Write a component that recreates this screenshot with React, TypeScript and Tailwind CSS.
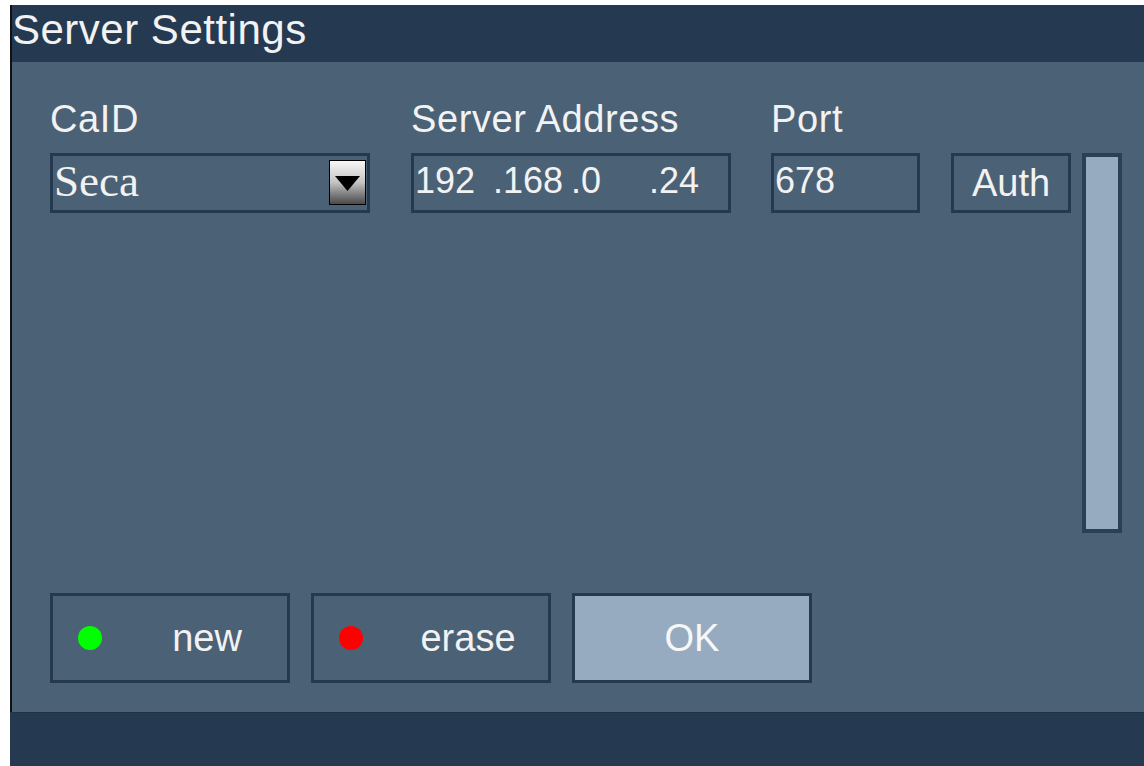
import React from 'react'

const sans = "font-['Liberation_Sans',Arial,sans-serif]"

// Field caption shown above each input column
function Label({ text, width }: { text: string; width: string }) {
  return (
    <div className={`${width} text-[38px] leading-none tracking-[0.6px] text-[#f2f2f2]`}>{text}</div>
  )
}

function DropArrow() {
  return (
    <div className="mt-[4px] mr-[1px] flex h-[45px] w-[37px] items-start justify-center border border-black bg-gradient-to-b from-[#f8f8f8] via-[#c4c4c4] to-[#4a4a4a]">
      <svg width="25" height="16" viewBox="0 0 25 16" className="mt-[15px]">
        <polygon points="0,0 25,0 12.5,15" fill="#000" />
      </svg>
    </div>
  )
}

function ActionButton({ label, dot }: { label: string; dot: string }) {
  return (
    <button className="flex h-[90px] w-[240px] items-center border-[3px] border-[#253a50] bg-[#4b6175]">
      <span className="flex w-[74px] justify-center">
        <span className={`h-[24px] w-[24px] rounded-full ${dot}`} />
      </span>
      <span className="flex-1 text-center text-[38px] leading-none text-[#f2f2f2]">{label}</span>
    </button>
  )
}

export default function App() {
  const ip = ['192', '.168', '.0', '.24']

  return (
    <div className={`h-[766px] w-[1144px] overflow-hidden bg-white pt-[5px] pl-[10px] ${sans}`}>
      <div className="flex h-[761px] flex-col">
        <div className="border-l-2 border-[#111]">
          {/* title bar */}
          <div className="h-[57px] bg-[#253a50] pt-[4px]">
            <h1 className="text-[42px] leading-none font-normal tracking-[0.5px] text-[#f2f2f2]">Server Settings</h1>
          </div>

          {/* form body */}
          <div className="h-[650px] bg-[#4b6175] pt-[38px] pl-[38px]">
            <div className="flex">
              <Label text="CaID" width="w-[361px]" />
              <Label text="Server Address" width="w-[360px]" />
              <Label text="Port" width="w-[180px]" />
            </div>

            <div className="mt-[15px] flex items-start">
              <div className="flex h-[60px] w-[320px] items-start justify-between border-[3px] border-[#253a50]">
                <span className="pt-[3px] pl-[1px] font-['Liberation_Serif',serif] text-[45px] leading-none text-[#f2f2f2]">
                  Seca
                </span>
                <DropArrow />
              </div>

              <div className="ml-[41px] flex h-[60px] w-[320px] border-[3px] border-[#253a50] pt-[7px] pl-[1px]">
                {ip.map((part) => (
                  <span key={part} className="w-[78px] text-[36px] leading-none text-[#f2f2f2]">
                    {part}
                  </span>
                ))}
              </div>

              <div className="ml-[40px] h-[60px] w-[149px] border-[3px] border-[#253a50] pt-[7px] pl-[1px] text-[36px] leading-none text-[#f2f2f2]">
                678
              </div>

              <button className="ml-[31px] flex h-[60px] w-[120px] items-center justify-center border-[3px] border-[#253a50] text-[38px] leading-none text-[#f2f2f2]">
                Auth
              </button>

              {/* scroll bar */}
              <div className="ml-[11px] h-[380px] w-[40px] border-4 border-[#2a4057] bg-[#97abc0]" />
            </div>

            <div className="mt-[60px] flex gap-[21px]">
              <ActionButton label="new" dot="bg-[#00ff00]" />
              <ActionButton label="erase" dot="bg-[#ff0000]" />
              <button className="h-[90px] w-[240px] border-[3px] border-[#253a50] bg-[#97abc0] text-[38px] leading-none text-[#f7f7f7]">
                OK
              </button>
            </div>
          </div>
        </div>

        {/* status bar */}
        <div className="flex-1 border-t border-[#1f3246] bg-[#253a50]" />
      </div>
    </div>
  )
}
